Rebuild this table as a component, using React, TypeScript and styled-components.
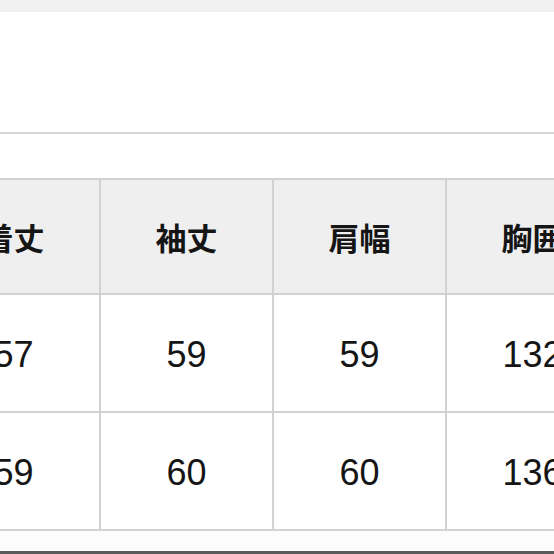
import React from "react";
import styled, { createGlobalStyle } from "styled-components";

const GlobalStyle = createGlobalStyle`
  html, body {
    margin: 0;
    padding: 0;
    background: #ffffff;
  }
  body {
    font-family: "Liberation Sans", "Noto Sans CJK JP", sans-serif;
    color: #111;
  }
`;

const Page = styled.div`
  width: 554px;
  height: 554px;
  overflow: hidden;
  display: flex;
  flex-direction: column;
  background: #fff;
`;

const TopBand = styled.div`
  height: 12px;
  background: #f1f1f1;
`;

const Blank = styled.div`
  height: 120px;
  background: #fff;
`;

const Divider = styled.div`
  height: 2px;
  background: #d8d8d8;
`;

const Spacer = styled.div`
  height: 44px;
`;

// size chart, scrolled sideways so the first and last columns are cut
const Table = styled.div`
  margin-left: -74px;
  width: max-content;
  display: grid;
  grid-template-columns: repeat(4, 171px);
  grid-template-rows: 113px 116px 116px;
  gap: 2px;
  padding: 2px;
  background: #d2d2d2;
`;

const Cell = styled.div<{ $head?: boolean }>`
  display: flex;
  align-items: center;
  justify-content: center;
  background: ${(p) => (p.$head ? "#efefef" : "#ffffff")};
  font-family: ${(p) =>
    p.$head
      ? '"Noto Sans CJK JP", sans-serif'
      : '"Liberation Sans", Arial, sans-serif'};
  font-weight: ${(p) => (p.$head ? 700 : 400)};
  font-size: ${(p) => (p.$head ? "31px" : "36px")};
  padding-top: ${(p) => (p.$head ? "0" : "4px")};
  color: #151515;
  white-space: nowrap;
`;

const Rest = styled.div`
  flex: 1;
  background: #fcfcfc;
`;

const BottomLine = styled.div`
  height: 3px;
  background: #5a5a5a;
`;

const head = ["着丈", "袖丈", "肩幅", "胸囲"];
const rows = [
  ["57", "59", "59", "132"],
  ["59", "60", "60", "136"],
];

export default function App() {
  return (
    <>
      <GlobalStyle />
      <Page>
        <TopBand />
        <Blank />
        <Divider />
        <Spacer />
        <Table>
          {head.map((h, i) => (
            <Cell $head key={"h" + i}>
              {h}
            </Cell>
          ))}
          {rows.map((r, ri) =>
            r.map((v, ci) => <Cell key={ri + "-" + ci}>{v}</Cell>)
          )}
        </Table>
        <Rest />
        <BottomLine />
      </Page>
    </>
  );
}
